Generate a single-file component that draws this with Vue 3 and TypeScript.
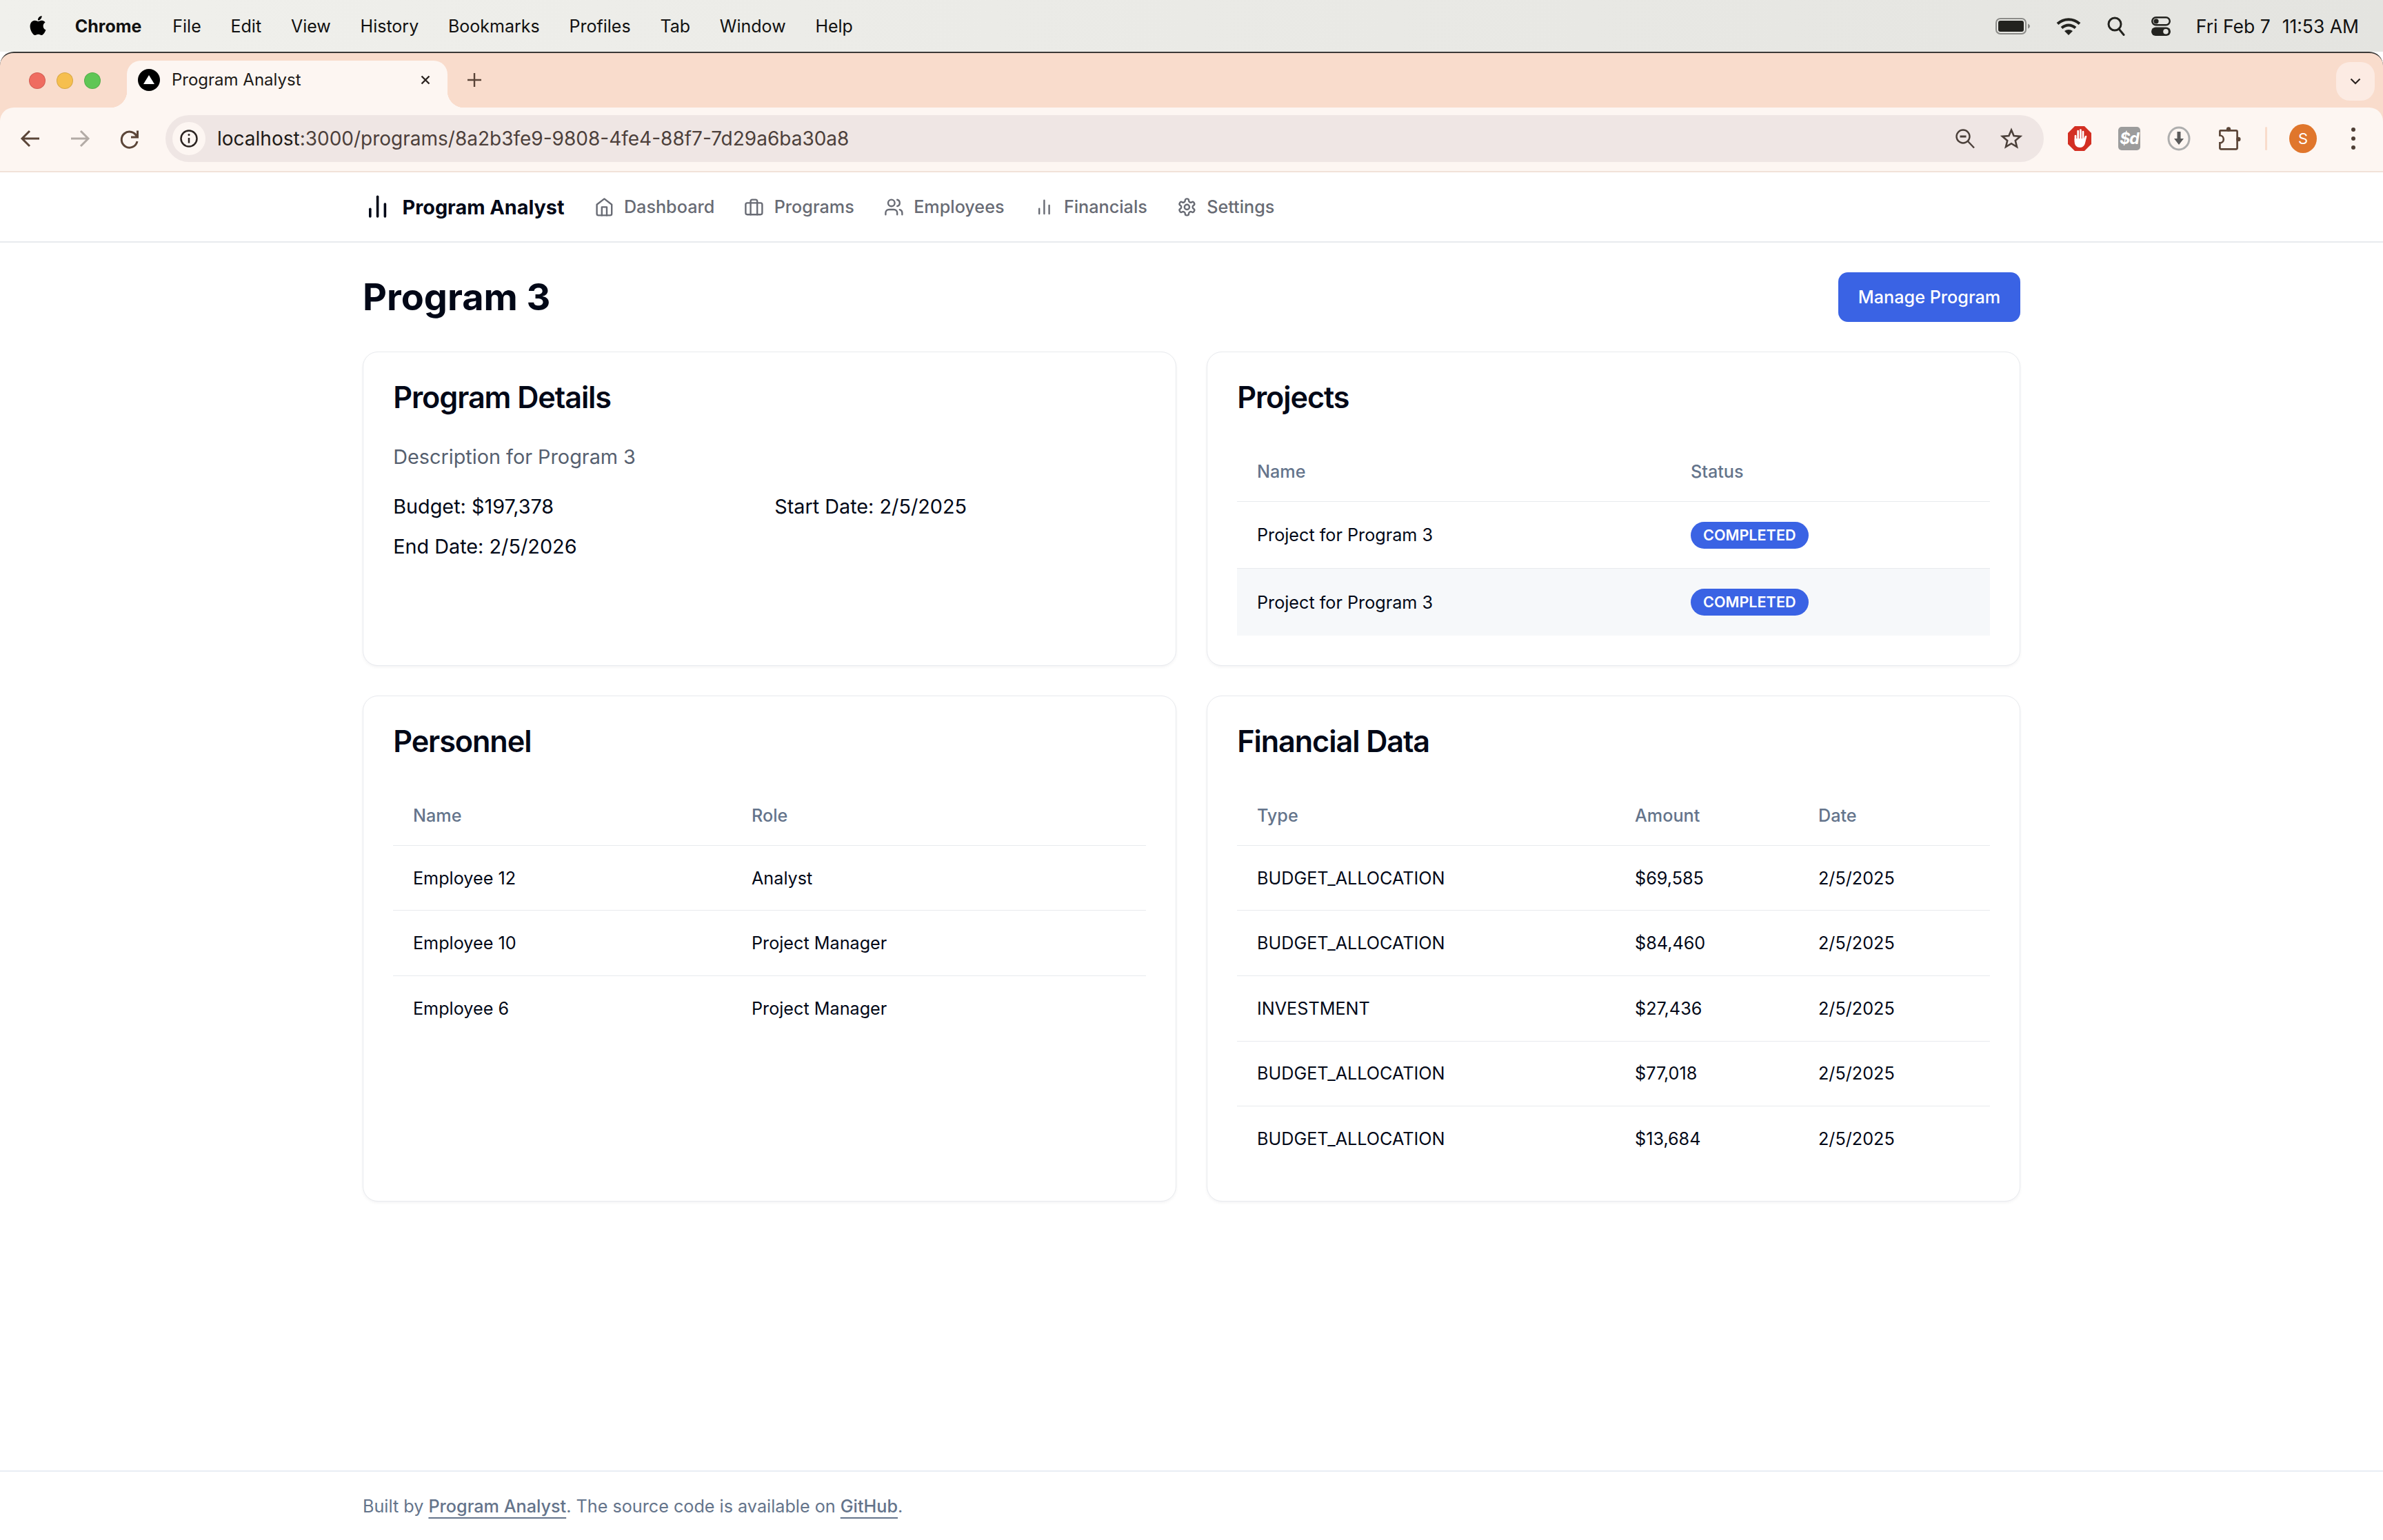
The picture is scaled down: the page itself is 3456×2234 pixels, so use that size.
<script setup lang="ts">
interface NavItem {
  label: string;
  icon: 'home' | 'briefcase' | 'users' | 'chart' | 'gear';
}

interface FinanceRow {
  type: string;
  amount: string;
  date: string;
}

const menuItems: string[] = ['File', 'Edit', 'View', 'History', 'Bookmarks', 'Profiles', 'Tab', 'Window', 'Help'];

const navItems: NavItem[] = [
  { label: 'Dashboard', icon: 'home' },
  { label: 'Programs', icon: 'briefcase' },
  { label: 'Employees', icon: 'users' },
  { label: 'Financials', icon: 'chart' },
  { label: 'Settings', icon: 'gear' }
];

const projects: string[] = ['Project for Program 3', 'Project for Program 3'];

const personnel = [
  { name: 'Employee 12', role: 'Analyst' },
  { name: 'Employee 10', role: 'Project Manager' },
  { name: 'Employee 6', role: 'Project Manager' }
];

const financials: FinanceRow[] = [
  { type: 'BUDGET_ALLOCATION', amount: '$69,585', date: '2/5/2025' },
  { type: 'BUDGET_ALLOCATION', amount: '$84,460', date: '2/5/2025' },
  { type: 'INVESTMENT', amount: '$27,436', date: '2/5/2025' },
  { type: 'BUDGET_ALLOCATION', amount: '$77,018', date: '2/5/2025' },
  { type: 'BUDGET_ALLOCATION', amount: '$13,684', date: '2/5/2025' }
];
</script>

<template>
  <div class="screen">
    <header class="menubar">
      <svg class="apple" viewBox="0 0 24 24" fill="#000">
        <path d="M12.152 6.896c-.948 0-2.415-1.078-3.96-1.04-2.04.027-3.91 1.183-4.961 3.014-2.117 3.675-.546 9.103 1.519 12.09 1.013 1.454 2.208 3.09 3.792 3.039 1.52-.065 2.09-.987 3.935-.987 1.831 0 2.35.987 3.96.948 1.637-.026 2.676-1.48 3.676-2.948 1.156-1.688 1.636-3.325 1.662-3.415-.039-.013-3.182-1.221-3.22-4.857-.026-3.04 2.48-4.494 2.597-4.559-1.429-2.09-3.623-2.324-4.39-2.376-2-.156-3.675 1.09-4.61 1.09zM15.53 3.83c.843-1.012 1.4-2.427 1.245-3.83-1.207.052-2.662.805-3.532 1.818-.78.896-1.454 2.338-1.273 3.714 1.338.104 2.715-.688 3.559-1.701" />
      </svg>
      <span class="menu-app">Chrome</span>
      <span v-for="item in menuItems" :key="item" class="menu-item">{{ item }}</span>

      <div class="status">
        <svg class="st-battery" viewBox="0 0 51 24">
          <rect x="1" y="1" width="43" height="22" rx="6" fill="none" stroke="#8b8b88" stroke-width="2" />
          <rect x="4" y="4" width="37" height="16" rx="3" fill="#23231f" />
          <path d="M47 8.5c2 .8 3 2 3 3.5s-1 2.700-3 3.500z" fill="#8b8b88" />
        </svg>
        <svg class="st-wifi" viewBox="0 0 36 28" fill="none" stroke="#23231f" stroke-width="4">
          <path d="M2 10.500C11 2 25 2 34 10.500" />
          <path d="M8 16.500c6-5.500 14-5.500 20 0" />
          <path d="M18 27l-6-6c3.500-2.800 8.500-2.800 12 0z" fill="#23231f" stroke="none" />
        </svg>
        <svg class="st-search" viewBox="0 0 26 28" fill="none" stroke="#23231f" stroke-width="3">
          <circle cx="11" cy="11" r="9" />
          <path d="M17 18l7 8.500" stroke-linecap="round" />
        </svg>
        <svg class="st-control" viewBox="0 0 28 28">
          <rect x="1.250" y="1.250" width="25.500" height="11" rx="5.500" fill="none" stroke="#23231f" stroke-width="2.500" />
          <circle cx="7" cy="6.800" r="3.600" fill="#23231f" />
          <rect y="15.500" width="28" height="12.500" rx="6.250" fill="#23231f" />
          <circle cx="21" cy="21.700" r="3.800" fill="#e4e4e0" />
        </svg>
        <span class="st-date">Fri Feb 7</span>
        <span class="st-time">11:53 AM</span>
      </div>
    </header>

    <div class="window">
      <div class="tabstrip">
        <div class="lights">
          <span class="light light-red"></span>
          <span class="light light-yellow"></span>
          <span class="light light-green"></span>
        </div>
        <div class="tab">
          <svg class="favicon" viewBox="0 0 32 32">
            <circle cx="16" cy="16" r="16" fill="#000" />
            <path d="M16 9l8 13H8z" fill="#fff" />
          </svg>
          <span class="tab-title">Program Analyst</span>
          <svg class="tab-close" viewBox="0 0 16 16" fill="none" stroke="#2b2320" stroke-width="2.400">
            <path d="M2.500 2.500l11 11M13.500 2.500l-11 11" />
          </svg>
        </div>
        <svg class="tab-new" viewBox="0 0 20 20" fill="none" stroke="#5a4438" stroke-width="2.400">
          <path d="M10 0v20M0 10h20" />
        </svg>
        <div class="tab-search">
          <svg viewBox="0 0 16 10" fill="none" stroke="#2b2320" stroke-width="2.200">
            <path d="M1.500 1.500L8 8l6.500-6.500" />
          </svg>
        </div>
      </div>

      <div class="toolbar">
        <svg class="tool" viewBox="0 0 48 48" fill="none" stroke="#5b4538" stroke-width="3">
          <path d="M37 24H12M23 13L12 24l11 11" />
        </svg>
        <svg class="tool" viewBox="0 0 48 48" fill="none" stroke="#b3aba6" stroke-width="3">
          <path d="M11 24h25M25 13l11 11-11 11" />
        </svg>
        <svg class="tool" viewBox="0 0 48 48" fill="none" stroke="#5b4538" stroke-width="3">
          <path d="M34.500 21.500A11.500 11.500 0 1 0 35 28" />
          <path d="M35.500 12.500v9.500h-9.500" />
        </svg>

        <div class="omnibox">
          <span class="site-info">
            <svg viewBox="0 0 28 28" fill="none" stroke="#2b2320" stroke-width="2.500">
              <circle cx="14" cy="14" r="11.500" />
              <path d="M14 13v7.500" />
              <circle cx="14" cy="8.500" r="1.500" fill="#2b2320" stroke="none" />
            </svg>
          </span>
          <span class="url">localhost<span class="url-path">:3000/programs/8a2b3fe9-9808-4fe4-88f7-7d29a6ba30a8</span></span>
          <svg class="omni-icon omni-zoom" viewBox="0 0 32 32" fill="none" stroke="#4b403a" stroke-width="2.400">
            <circle cx="13" cy="13" r="9.500" />
            <path d="M8.500 13h9" stroke-width="3" />
            <path d="M20 20l9 9.500" />
          </svg>
          <svg class="omni-icon omni-star" viewBox="0 0 32 32" fill="none" stroke="#4b403a" stroke-width="2.600">
            <path d="M16 3.500l3.600 8.600 9.300.8-7.100 6.100 2.200 9.100-8-4.900-8 4.900 2.200-9.100-7.100-6.100 9.300-.8z" />
          </svg>
        </div>

        <div class="extensions">
          <svg class="ext" viewBox="0 0 34 36">
            <path d="M10 0h14l10 10v16L24 36H10L0 26V10z" fill="#d32f23" />
            <g stroke="#fff" stroke-width="2.700" stroke-linecap="round">
              <path d="M11 14v8" />
              <path d="M14.700 7v12" />
              <path d="M18.400 5.500v13.500" />
              <path d="M22 8v11" />
            </g>
            <path d="M9.700 18h13.600l1.500-3.500c.6-1.400 2.900-.8 2.500.8l-2.300 9.200c-.8 3.400-3.200 6.500-7.200 6.500-5 0-8.100-3.500-8.100-7.500z" fill="#fff" />
          </svg>
          <span class="ext ext-sd">$d</span>
          <svg class="ext" viewBox="0 0 34 36" fill="none">
            <ellipse cx="17" cy="18" rx="15" ry="16" stroke="#aeaeae" stroke-width="3" />
            <path d="M14.500 8h5v10h4.500L17 27l-7-9h4.500z" fill="#5a5a5a" />
          </svg>
          <svg class="ext" viewBox="0 0 36 40" fill="none" stroke="#5b4538" stroke-width="3">
            <path d="M5 7h25a2 2 0 0 1 2 2v26a2 2 0 0 1-2 2H6a2 2 0 0 1-2-2v-8a6 6 0 0 0 0-12V8a1 1 0 0 1 1-1z" />
            <circle cx="18" cy="5" r="3.500" fill="#5b4538" stroke="none" />
            <circle cx="34" cy="21" r="3.500" fill="#5b4538" stroke="none" />
          </svg>
        </div>
        <span class="divider"></span>
        <span class="avatar">S</span>
        <span class="dots"><i></i><i></i><i></i></span>
      </div>
    </div>

    <div class="app">
      <nav class="topnav">
        <div class="container nav-inner">
          <a class="brand">
            <svg class="brand-icon" viewBox="0 0 24 24" fill="none" stroke="currentColor" stroke-width="2" stroke-linecap="round" stroke-linejoin="round">
              <line x1="18" y1="20" x2="18" y2="10" />
              <line x1="12" y1="20" x2="12" y2="4" />
              <line x1="6" y1="20" x2="6" y2="14" />
            </svg>
            <span>Program Analyst</span>
          </a>
          <a v-for="item in navItems" :key="item.label" class="nav-link">
            <svg class="nav-icon" viewBox="0 0 24 24" fill="none" stroke="currentColor" stroke-width="2" stroke-linecap="round" stroke-linejoin="round">
              <template v-if="item.icon === 'home'">
                <path d="m3 9 9-7 9 7v11a2 2 0 0 1-2 2H5a2 2 0 0 1-2-2z" />
                <polyline points="9 22 9 12 15 12 15 22" />
              </template>
              <template v-else-if="item.icon === 'briefcase'">
                <rect x="2" y="7" width="20" height="14" rx="2" ry="2" />
                <path d="M16 21V5a2 2 0 0 0-2-2h-4a2 2 0 0 0-2 2v16" />
              </template>
              <template v-else-if="item.icon === 'users'">
                <path d="M16 21v-2a4 4 0 0 0-4-4H6a4 4 0 0 0-4 4v2" />
                <circle cx="9" cy="7" r="4" />
                <path d="M22 21v-2a4 4 0 0 0-3-3.870" />
                <path d="M16 3.130a4 4 0 0 1 0 7.750" />
              </template>
              <template v-else-if="item.icon === 'chart'">
                <line x1="18" y1="20" x2="18" y2="10" />
                <line x1="12" y1="20" x2="12" y2="4" />
                <line x1="6" y1="20" x2="6" y2="14" />
              </template>
              <template v-else>
                <path d="M12.220 2h-.44a2 2 0 0 0-2 2v.18a2 2 0 0 1-1 1.730l-.43.250a2 2 0 0 1-2 0l-.15-.08a2 2 0 0 0-2.730.730l-.22.380a2 2 0 0 0 .730 2.730l.15.100a2 2 0 0 1 1 1.720v.510a2 2 0 0 1-1 1.740l-.15.090a2 2 0 0 0-.730 2.730l.22.380a2 2 0 0 0 2.730.730l.15-.08a2 2 0 0 1 2 0l.43.250a2 2 0 0 1 1 1.730V20a2 2 0 0 0 2 2h.44a2 2 0 0 0 2-2v-.18a2 2 0 0 1 1-1.730l.43-.25a2 2 0 0 1 2 0l.15.080a2 2 0 0 0 2.730-.73l.22-.39a2 2 0 0 0-.73-2.730l-.15-.08a2 2 0 0 1-1-1.740v-.5a2 2 0 0 1 1-1.740l.15-.09a2 2 0 0 0 .73-2.730l-.22-.38a2 2 0 0 0-2.730-.73l-.15.08a2 2 0 0 1-2 0l-.43-.25a2 2 0 0 1-1-1.730V4a2 2 0 0 0-2-2z" />
                <circle cx="12" cy="12" r="3" />
              </template>
            </svg>
            <span>{{ item.label }}</span>
          </a>
        </div>
      </nav>

      <main class="container main">
        <div class="page-head">
          <h1>Program 3</h1>
          <button class="primary" type="button">Manage Program</button>
        </div>

        <div class="cards">
          <section class="card">
            <h2>Program Details</h2>
            <p class="description">Description for Program 3</p>
            <div class="facts">
              <p>Budget: $197,378</p>
              <p>Start Date: 2/5/2025</p>
              <p>End Date: 2/5/2026</p>
            </div>
          </section>

          <section class="card">
            <h2>Projects</h2>
            <table>
              <colgroup>
                <col class="w-project" />
                <col />
              </colgroup>
              <thead>
                <tr><th>Name</th><th>Status</th></tr>
              </thead>
              <tbody>
                <tr v-for="(project, i) in projects" :key="i" :class="{ hovered: i === 1 }">
                  <td>{{ project }}</td>
                  <td class="badge-cell"><span class="badge">COMPLETED</span></td>
                </tr>
              </tbody>
            </table>
          </section>

          <section class="card">
            <h2>Personnel</h2>
            <table>
              <colgroup>
                <col class="w-person" />
                <col />
              </colgroup>
              <thead>
                <tr><th>Name</th><th>Role</th></tr>
              </thead>
              <tbody>
                <tr v-for="person in personnel" :key="person.name">
                  <td>{{ person.name }}</td>
                  <td>{{ person.role }}</td>
                </tr>
              </tbody>
            </table>
          </section>

          <section class="card">
            <h2>Financial Data</h2>
            <table>
              <colgroup>
                <col class="w-type" />
                <col class="w-amount" />
                <col />
              </colgroup>
              <thead>
                <tr><th>Type</th><th>Amount</th><th>Date</th></tr>
              </thead>
              <tbody>
                <tr v-for="row in financials" :key="row.amount">
                  <td>{{ row.type }}</td>
                  <td>{{ row.amount }}</td>
                  <td>{{ row.date }}</td>
                </tr>
              </tbody>
            </table>
          </section>
        </div>
      </main>

      <footer class="footer">
        <p class="container">
          Built by <a>Program Analyst</a>. The source code is available on <a>GitHub</a>.
        </p>
      </footer>
    </div>
  </div>
</template>

<style>
html,
body {
  margin: 0;
  background: #fff;
}
</style>

<style scoped>
.screen {
  width: 3456px;
  height: 2234px;
  display: flex;
  flex-direction: column;
  overflow: hidden;
  font-family: Inter, 'Liberation Sans', sans-serif;
  color: #020817;
  background: #fff;
}

/* macOS menu bar */
.menubar {
  height: 75px;
  flex: none;
  display: flex;
  align-items: center;
  gap: 42.800px;
  padding: 0 35px 0 41px;
  box-sizing: border-box;
  background: linear-gradient(90deg, #f0f0ec, #e4e4e0);
  font-size: 25px;
  color: #111;
}

.apple {
  width: 28px;
  height: 32px;
  margin-top: -2px;
  margin-right: -3px;
}

.menu-app {
  font-weight: 700;
  margin-right: 2px;
}

.status {
  margin-left: auto;
  display: flex;
  align-items: center;
  font-size: 26.500px;
}

.st-battery {
  width: 51px;
  height: 24px;
  margin-right: 37px;
}

.st-wifi {
  width: 36px;
  height: 28px;
  margin-right: 38px;
}

.st-search {
  width: 26px;
  height: 28px;
  margin-right: 38px;
}

.st-control {
  width: 28px;
  height: 28px;
  margin-right: 37px;
}

.st-date {
  margin-right: 17px;
}

/* browser window */
.window {
  flex: none;
  background: #f9dccc;
  border-top: 2px solid #3b3937;
  border-radius: 20px 20px 0 0;
  overflow: hidden;
}

.tabstrip {
  height: 79px;
  display: flex;
  align-items: flex-start;
  padding-top: 11px;
  box-sizing: border-box;
}

.lights {
  display: flex;
  gap: 16px;
  margin: 17px 38px 0 42px;
}

.light {
  width: 24px;
  height: 24px;
  box-sizing: border-box;
  border-radius: 50%;
  border: 1px solid rgba(0, 0, 0, 0.12);
}

.light-red {
  background: #ef6c60;
}

.light-yellow {
  background: #f6bf4f;
}

.light-green {
  background: #60c655;
}

.tab {
  position: relative;
  width: 465px;
  height: 68px;
  box-sizing: border-box;
  display: flex;
  align-items: flex-start;
  padding: 12px 24px 0 16px;
  background: #fdf6f2;
  border-radius: 20px 20px 0 0;
  font-size: 24px;
  color: #201a17;
}

.tab::before,
.tab::after {
  content: '';
  position: absolute;
  bottom: 0;
  width: 24px;
  height: 24px;
}

.tab::before {
  left: -24px;
  background: radial-gradient(circle at 0 0, #f9dccc 24px, #fdf6f2 24.500px);
}

.tab::after {
  right: -24px;
  background: radial-gradient(circle at 100% 0, #f9dccc 24px, #fdf6f2 24.500px);
}

.favicon {
  width: 32px;
  height: 32px;
  flex: none;
  margin-right: 17px;
}

.tab-title {
  line-height: 32px;
}

.tab-close {
  width: 16px;
  height: 16px;
  margin: 8px 0 0 auto;
}

.tab-new {
  width: 20px;
  height: 20px;
  margin: 18px 0 0 29px;
}

.tab-search {
  width: 56px;
  height: 56px;
  margin: 2px 12px 0 auto;
  border-radius: 20px;
  background: #fcebe3;
  display: flex;
  align-items: center;
  justify-content: center;
}

.tab-search svg {
  width: 16px;
  height: 10px;
}

.toolbar {
  height: 94px;
  box-sizing: border-box;
  display: flex;
  align-items: center;
  gap: 24px;
  padding: 0 40px 2px 20px;
  background: #fdf6f2;
  border-bottom: 2px solid #f1e2d8;
  border-radius: 20px 20px 0 0;
}

.tool {
  width: 48px;
  height: 48px;
  flex: none;
}

.omnibox {
  flex: 1;
  height: 68px;
  margin-left: 4px;
  display: flex;
  align-items: center;
  padding: 0 31px 0 10px;
  border-radius: 34px;
  background: #efe6e4;
}

.site-info {
  width: 48px;
  height: 48px;
  border-radius: 50%;
  background: #fdf6f2;
  display: flex;
  align-items: center;
  justify-content: center;
}

.site-info svg {
  width: 28px;
  height: 28px;
}

.url {
  margin-left: 17px;
  font-size: 28px;
  color: #201a17;
}

.url-path {
  color: #4c403b;
}

.omni-icon {
  width: 32px;
  height: 32px;
}

.omni-zoom {
  margin-left: auto;
  margin-right: 35px;
}

.extensions {
  display: flex;
  align-items: center;
  gap: 24px;
  margin-left: 4px;
}

.ext {
  width: 48px;
  height: 36px;
}

.ext-sd {
  box-sizing: border-box;
  width: 32px;
  height: 34px;
  margin: 0 8px;
  border-radius: 5px;
  background: #9c9c9c;
  color: #fff;
  font-size: 23px;
  font-weight: 700;
  font-style: italic;
  letter-spacing: -1px;
  line-height: 34px;
  text-align: center;
}

.divider {
  width: 3px;
  height: 34px;
  margin-left: 5px;
  border-radius: 2px;
  background: #f9dccc;
}

.avatar {
  width: 40px;
  height: 42px;
  margin-left: 8px;
  border-radius: 50%;
  background: #e0762c;
  color: #fff;
  font-size: 22px;
  line-height: 42px;
  text-align: center;
}

.dots {
  display: flex;
  flex-direction: column;
  gap: 7px;
  margin-left: 26px;
}

.dots i {
  width: 6px;
  height: 6px;
  border-radius: 50%;
  background: #4f3f36;
}

/* application */
.app {
  flex: 1;
  display: flex;
  flex-direction: column;
  min-height: 0;
}

.container {
  width: 2404px;
  margin: 0 auto;
}

.topnav {
  height: 102px;
  flex: none;
  box-sizing: border-box;
  border-bottom: 2px solid #e8eaee;
}

.nav-inner {
  height: 100%;
  display: flex;
  align-items: center;
  gap: 43.200px;
}

.brand {
  display: flex;
  align-items: center;
  gap: 14.400px;
  font-size: 28.800px;
  font-weight: 700;
}

.brand-icon {
  width: 43.200px;
  height: 43.200px;
}

.nav-link {
  display: flex;
  align-items: center;
  gap: 14.400px;
  font-size: 25.200px;
  font-weight: 500;
  color: #686b74;
}

.nav-icon {
  width: 28.800px;
  height: 28.800px;
}

.main {
  flex: 1;
  padding-top: 43.200px;
}

.page-head {
  display: flex;
  align-items: center;
  justify-content: space-between;
  margin-bottom: 43.200px;
}

h1 {
  margin: 0;
  font-size: 54px;
  line-height: 64.800px;
  font-weight: 700;
}

.primary {
  height: 72px;
  padding: 0 28.800px;
  border: 0;
  border-radius: 14px;
  background: #3a63e4;
  color: #fff;
  font: 500 25.200px Inter, 'Liberation Sans', sans-serif;
}

.cards {
  display: grid;
  grid-template-columns: 1180px 1180px;
  gap: 43.200px 44px;
}

.card {
  box-sizing: border-box;
  padding: 43.200px;
  border: 1.800px solid #e8eaee;
  border-radius: 22px;
  background: #fff;
  box-shadow: 0 2px 4px rgba(15, 23, 42, 0.05);
}

h2 {
  margin: 0 0 43.200px;
  font-size: 43.200px;
  line-height: 43.200px;
  font-weight: 600;
  letter-spacing: -1.080px;
}

.description {
  margin: 0;
  font-size: 28.800px;
  line-height: 43.200px;
  color: #56606f;
}

.facts {
  display: grid;
  grid-template-columns: 1fr 1fr;
  gap: 14.400px;
  margin-top: 28.800px;
  font-size: 28.800px;
  line-height: 43.200px;
}

.facts p {
  margin: 0;
}

table {
  width: 100%;
  table-layout: fixed;
  border-collapse: collapse;
  font-size: 25.200px;
  line-height: 36px;
}

.w-project {
  width: 629px;
}

.w-person {
  width: 491px;
}

.w-type {
  width: 548px;
}

.w-amount {
  width: 266px;
}

th {
  height: 86.400px;
  padding: 0 28.800px;
  box-sizing: border-box;
  text-align: left;
  font-weight: 500;
  color: #64748b;
}

td {
  padding: 28.800px;
}

tr {
  border-bottom: 1.800px solid #e8eaee;
}

tbody tr:last-child {
  border-bottom: 0;
}

.hovered {
  background: #f6f8fa;
}

.badge-cell {
  line-height: 0;
}

.badge {
  display: inline-block;
  padding: 0 18px;
  border-radius: 20px;
  background: #3a63e4;
  color: #fff;
  font-size: 21.600px;
  font-weight: 600;
  line-height: 39px;
}

.footer {
  height: 101px;
  flex: none;
  box-sizing: border-box;
  border-top: 2px solid #e8edf4;
  display: flex;
  align-items: center;
}

.footer p {
  margin: 0 auto;
  font-size: 25.200px;
  color: #64748b;
}

.footer a {
  font-weight: 500;
  text-decoration: underline;
  text-underline-offset: 7.200px;
}
</style>
